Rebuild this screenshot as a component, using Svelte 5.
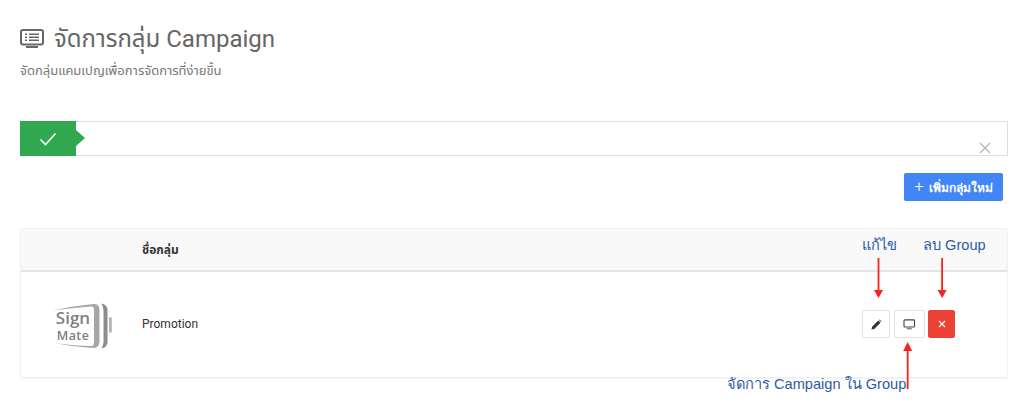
<script lang="ts">
  // Campaign group management page with the annotation arrows on top
  const groups = [{ id: 1, name: "Promotion" }];
</script>

<main class="page">
  <header class="head">
    <h1>
      <svg class="title-icon" viewBox="0 0 24 20" aria-hidden="true">
        <rect x="1" y="1" width="22" height="14.5" rx="2" fill="none" stroke="currentColor" stroke-width="2" />
        <path d="M5 5.2h2M9 5.2h10M5 8.2h2M9 8.2h10M5 11.2h2M9 11.2h10" stroke="currentColor" stroke-width="1.4" />
        <path d="M6 17h12v2H6z" fill="currentColor" />
      </svg>
      จัดการกลุ่ม Campaign
    </h1>
    <p class="sub">จัดกลุ่มแคมเปญเพื่อการจัดการที่ง่ายขึ้น</p>
  </header>

  <div class="alert">
    <div class="alert-tag">
      <svg viewBox="0 0 18 14" width="18" height="14" aria-hidden="true">
        <path d="M1.5 7.5l5 5L16.5 1.5" fill="none" stroke="#fff" stroke-width="1.6" />
      </svg>
    </div>
    <svg class="alert-close" viewBox="0 0 12 12" aria-hidden="true">
      <path d="M1 1l10 10M11 1L1 11" stroke="#b5b5b5" stroke-width="1.3" />
    </svg>
  </div>

  <div class="toolbar">
    <button class="add"><span class="plus">+</span> เพิ่มกลุ่มใหม่</button>
  </div>

  <section class="card">
    <div class="row row-head">
      <div class="col-logo"></div>
      <div class="col-name">ชื่อกลุ่ม</div>
    </div>
    {#each groups as group (group.id)}
      <div class="row row-body">
        <div class="col-logo">
          <svg class="logo" viewBox="0 0 60 46" aria-hidden="true">
            <path d="M0 7.5 Q20 3 40 1 Q46 0.5 46.5 6 V39 Q46 45 40 45 Q20 44 1 40 Q22 43 38.5 43 Q41 43 41 40 V6 Q41 3.3 38 3.6 Q18 5 0 7.5Z" fill="#a6a6a6" />
            <path d="M48 0.5 Q54.5 1.5 54.5 7 V39 Q54.5 44.5 48 45.5 Q50.5 43 50.5 39 V7 Q50.5 3 48 0.5Z" fill="#8c8c8c" />
            <rect x="56" y="14.5" width="2.8" height="15" fill="#b3b3b3" />
            <text x="20" y="21" class="logo-sign">Sign</text>
            <text x="20" y="37" class="logo-mate">Mate</text>
          </svg>
        </div>
        <div class="col-name">{group.name}</div>
        <div class="actions">
          <button class="icon-btn edit" aria-label="แก้ไข">
            <svg viewBox="0 0 12 12" width="11" height="11" aria-hidden="true">
              <path d="M0.5 11.5l.7-3L8 1.7l2.3 2.3-6.8 6.8zM8.8 1l.6-.5 2.1 2.1-.5.6z" fill="#333" />
            </svg>
          </button>
          <button class="icon-btn manage" aria-label="จัดการ Campaign">
            <svg viewBox="0 0 14 12" width="13" height="11" aria-hidden="true">
              <rect x="1" y="1" width="11.5" height="7.8" rx="1" fill="none" stroke="#444" stroke-width="1.2" />
              <path d="M4 10.2h5.5v1H4z" fill="#444" />
            </svg>
          </button>
          <button class="icon-btn remove" aria-label="ลบ">
            <svg viewBox="0 0 8 8" width="8" height="8" aria-hidden="true">
              <path d="M1 1l6 6M7 1L1 7" stroke="#fff" stroke-width="1.2" />
            </svg>
          </button>
        </div>
      </div>
    {/each}
  </section>

  <!-- hand-drawn annotations over the screenshot -->
  <span class="note note-edit">แก้ไข</span>
  <span class="note note-del">ลบ Group</span>
  <span class="note note-manage">จัดการ Campaign ใน Group</span>
  <svg class="arrows" viewBox="0 0 1024 404" aria-hidden="true">
    <g fill="#f8231c">
      <path d="M877.6 258h1.8v33h-1.8z" /><path d="M874 290h9l-4.5 8z" />
      <path d="M941.2 258h1.8v33h-1.8z" /><path d="M937.6 290h9l-4.5 8z" />
      <path d="M906.8 350h1.8v39h-1.8z" /><path d="M903.2 351h9l-4.5-9z" />
    </g>
  </svg>
</main>

<style>
  :global(body) {
    margin: 0;
    background: #fff;
  }

  .page {
    position: relative;
    box-sizing: border-box;
    height: 404px;
    padding: 24px 16px 0 20px;
    overflow: hidden;
    font-family: Roboto, "Noto Sans", "Noto Sans Thai", sans-serif;
    color: #444;
  }

  h1 {
    display: flex;
    align-items: center;
    gap: 10px;
    margin: 0;
    font-size: 24px;
    line-height: 30px;
    font-weight: 400;
    color: #666;
  }

  .title-icon {
    width: 24px;
    height: 20px;
    color: #666;
  }

  .sub {
    margin: 8px 0 0;
    font-size: 13px;
    line-height: 18px;
    color: #777;
  }

  .alert {
    position: relative;
    display: flex;
    height: 35px;
    margin-top: 41px;
    background: #fff;
    border: 1px solid #ddd;
    border-left: 0;
    box-sizing: border-box;
  }

  .alert-tag {
    position: relative;
    display: flex;
    align-items: center;
    justify-content: center;
    width: 56px;
    margin: -1px 0;
    background: #2fa84f;
  }

  .alert-tag::after {
    content: "";
    position: absolute;
    left: 100%;
    top: 9px;
    border-left: 9px solid #2fa84f;
    border-top: 8.5px solid transparent;
    border-bottom: 8.5px solid transparent;
  }

  .alert-close {
    position: absolute;
    right: 16px;
    bottom: 1px;
    width: 12px;
    height: 12px;
  }

  .toolbar {
    display: flex;
    justify-content: flex-end;
    margin-top: 17px;
    padding-right: 5px;
  }

  .add {
    height: 28px;
    width: 99px;
    padding: 0;
    border: 0;
    border-radius: 2px;
    background: #4285f4;
    color: #fff;
    font: 700 12px Roboto, "Noto Sans", sans-serif;
  }

  .plus {
    font-size: 16px;
    font-weight: 300;
    margin-right: 2px;
  }

  .card {
    margin-top: 27px;
    height: 150px;
    box-sizing: border-box;
    border: 1px solid #f0f0f0;
    border-radius: 2px;
    box-shadow: 0 1px 1px rgba(0, 0, 0, 0.04);
  }

  .row {
    display: flex;
    align-items: center;
  }

  .row-head {
    height: 41px;
    background: #f9f9f9;
    border-bottom: 2px solid #e4e4e4;
    font-size: 12px;
    font-weight: 700;
    color: #333;
  }

  .row-body {
    height: 106px;
    padding-bottom: 2px;
    box-sizing: border-box;
    font-size: 12px;
    color: #333;
  }

  .col-logo {
    display: flex;
    justify-content: center;
    width: 121px;
    flex: none;
  }

  .col-name {
    flex: 1;
  }

  .logo {
    width: 60px;
    height: 46px;
    margin: 4px 0 0 2px;
  }

  .logo-sign,
  .logo-mate {
    text-anchor: middle;
    fill: #808080;
    font-family: "Open Sans", sans-serif;
  }

  .logo-sign {
    font-size: 17px;
    font-weight: 600;
  }

  .logo-mate {
    font-size: 12.5px;
    font-weight: 600;
    letter-spacing: 0.4px;
  }

  .actions {
    display: flex;
    gap: 3px;
    margin-right: 52px;
  }

  .icon-btn {
    display: flex;
    align-items: center;
    justify-content: center;
    height: 28px;
    padding: 0;
    border-radius: 2px;
    background: #fff;
    border: 1px solid #e2e2e2;
  }

  .edit {
    width: 28px;
    margin-right: 1px;
  }

  .manage {
    width: 31px;
  }

  .remove {
    width: 27px;
    background: #ea4335;
    border-color: #ea4335;
  }

  .note {
    position: absolute;
    font-size: 14.6px;
    line-height: 18px;
    color: #2a5ca8;
    white-space: nowrap;
    font-family: "Liberation Sans", "Noto Sans", sans-serif;
  }

  .note-edit {
    left: 862px;
    top: 236px;
  }

  .note-del {
    left: 923px;
    top: 236px;
  }

  .note-manage {
    left: 727px;
    top: 375px;
  }

  .arrows {
    position: absolute;
    inset: 0;
    width: 1024px;
    height: 404px;
    pointer-events: none;
  }
</style>
